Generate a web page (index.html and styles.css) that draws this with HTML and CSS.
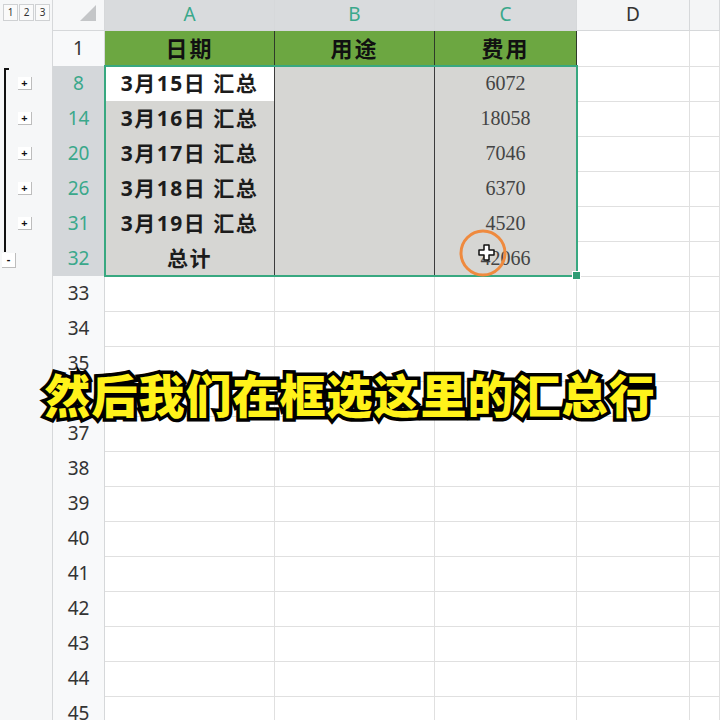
FILE: index.html
```html
<!DOCTYPE html>
<html lang="zh-CN">
<head>
    <meta charset="UTF-8">
    <meta name="viewport" content="width=device-width, initial-scale=1.0">
    <title>分类汇总</title>
    <link rel="stylesheet" href="styles.css">
</head>
<body>
<div class="sheet">
    <div class="row head">
        <div class="outline">
            <div class="levels"><span>1</span><span>2</span><span>3</span></div>
        </div>
        <div class="corner"><div class="tri"></div></div>
        <div class="col sel">A</div>
        <div class="col sel">B</div>
        <div class="col sel">C</div>
        <div class="col">D</div>
        <div class="col"></div>
    </div>

    <div class="row">
        <div class="outline"></div>
        <div class="num">1</div>
        <div class="cell title">日期</div>
        <div class="cell title">用途</div>
        <div class="cell title">费用</div>
        <div class="cell"></div>
        <div class="cell"></div>
    </div>
    <div class="row">
        <div class="outline"><span class="btn">+</span></div>
        <div class="num on">8</div>
        <div class="cell data name active">3月15日 汇总</div>
        <div class="cell data"></div>
        <div class="cell data money">6072</div>
        <div class="cell"></div>
        <div class="cell"></div>
    </div>
    <div class="row">
        <div class="outline"><span class="btn">+</span></div>
        <div class="num on">14</div>
        <div class="cell data name">3月16日 汇总</div>
        <div class="cell data"></div>
        <div class="cell data money">18058</div>
        <div class="cell"></div>
        <div class="cell"></div>
    </div>
    <div class="row">
        <div class="outline"><span class="btn">+</span></div>
        <div class="num on">20</div>
        <div class="cell data name">3月17日 汇总</div>
        <div class="cell data"></div>
        <div class="cell data money">7046</div>
        <div class="cell"></div>
        <div class="cell"></div>
    </div>
    <div class="row">
        <div class="outline"><span class="btn">+</span></div>
        <div class="num on">26</div>
        <div class="cell data name">3月18日 汇总</div>
        <div class="cell data"></div>
        <div class="cell data money">6370</div>
        <div class="cell"></div>
        <div class="cell"></div>
    </div>
    <div class="row">
        <div class="outline"><span class="btn">+</span></div>
        <div class="num on">31</div>
        <div class="cell data name">3月19日 汇总</div>
        <div class="cell data"></div>
        <div class="cell data money">4520</div>
        <div class="cell"></div>
        <div class="cell"></div>
    </div>
    <div class="row">
        <div class="outline"><span class="btn minus">-</span></div>
        <div class="num on">32</div>
        <div class="cell data name">总计</div>
        <div class="cell data"></div>
        <div class="cell data money">42066</div>
        <div class="cell"></div>
        <div class="cell"></div>
    </div>

    <div class="row"><div class="outline"></div><div class="num">33</div><div class="cell"></div><div class="cell"></div><div class="cell"></div><div class="cell"></div><div class="cell"></div></div>
    <div class="row"><div class="outline"></div><div class="num">34</div><div class="cell"></div><div class="cell"></div><div class="cell"></div><div class="cell"></div><div class="cell"></div></div>
    <div class="row"><div class="outline"></div><div class="num">35</div><div class="cell"></div><div class="cell"></div><div class="cell"></div><div class="cell"></div><div class="cell"></div></div>
    <div class="row"><div class="outline"></div><div class="num">36</div><div class="cell"></div><div class="cell"></div><div class="cell"></div><div class="cell"></div><div class="cell"></div></div>
    <div class="row"><div class="outline"></div><div class="num">37</div><div class="cell"></div><div class="cell"></div><div class="cell"></div><div class="cell"></div><div class="cell"></div></div>
    <div class="row"><div class="outline"></div><div class="num">38</div><div class="cell"></div><div class="cell"></div><div class="cell"></div><div class="cell"></div><div class="cell"></div></div>
    <div class="row"><div class="outline"></div><div class="num">39</div><div class="cell"></div><div class="cell"></div><div class="cell"></div><div class="cell"></div><div class="cell"></div></div>
    <div class="row"><div class="outline"></div><div class="num">40</div><div class="cell"></div><div class="cell"></div><div class="cell"></div><div class="cell"></div><div class="cell"></div></div>
    <div class="row"><div class="outline"></div><div class="num">41</div><div class="cell"></div><div class="cell"></div><div class="cell"></div><div class="cell"></div><div class="cell"></div></div>
    <div class="row"><div class="outline"></div><div class="num">42</div><div class="cell"></div><div class="cell"></div><div class="cell"></div><div class="cell"></div><div class="cell"></div></div>
    <div class="row"><div class="outline"></div><div class="num">43</div><div class="cell"></div><div class="cell"></div><div class="cell"></div><div class="cell"></div><div class="cell"></div></div>
    <div class="row"><div class="outline"></div><div class="num">44</div><div class="cell"></div><div class="cell"></div><div class="cell"></div><div class="cell"></div><div class="cell"></div></div>
    <div class="row"><div class="outline"></div><div class="num">45</div><div class="cell"></div><div class="cell"></div><div class="cell"></div><div class="cell"></div><div class="cell"></div></div>

    <!-- overlays -->
    <div class="bracket"></div>
    <div class="selection"><span class="handle"></span></div>
    <div class="pointer">
        <svg width="50" height="50" viewBox="0 0 50 50">
            <circle cx="25" cy="25" r="22" fill="none" stroke="#ef8a3e" stroke-width="3"/>
            <path d="M26 17h5v5h5v5h-5v5h-5v-5h-5v-5h5z" fill="#fff" stroke="#111" stroke-width="1.5" stroke-linejoin="round"/>
        </svg>
    </div>
    <div class="caption">然后我们在框选这里的汇总行</div>
</div>
</body>
</html>
```

FILE: styles.css
```css
html {
    font-family: 'Noto Sans', 'Noto Sans CJK SC', sans-serif;
}
body {
    margin: 0;
    background: #fff;
    overflow: hidden;
}
.sheet {
    position: relative;
    width: 720px;
    height: 720px;
    overflow: hidden;
}
.row {
    display: grid;
    grid-template-columns: 53px 52px 170px 160px 142px 113px 30px;
    height: 35px;
}
.row.head {
    height: 31px;
}
.row > div {
    box-sizing: border-box;
}

/* outline gutter */
.outline {
    background: #f6f7f8;
    border-right: 1px solid #d6d8da;
    position: relative;
}
.levels {
    display: flex;
    margin: 4px 0 0 3px;
}
.levels span {
    width: 13px;
    height: 15px;
    border: 1px solid #cfd1d3;
    background: #fafafa;
    font-size: 10px;
    line-height: 15px;
    text-align: center;
    color: #333;
    margin-right: 1px;
}
.btn {
    position: absolute;
    left: 18px;
    top: 11px;
    width: 13px;
    height: 12px;
    background: #fff;
    border-right: 1px solid #bdbdbd;
    border-bottom: 1px solid #bdbdbd;
    font-size: 11px;
    font-weight: 700;
    line-height: 11px;
    text-align: center;
    color: #111;
}
.btn.minus {
    left: 2px;
    top: 12px;
    width: 13px;
    height: 14px;
}

/* headers */
.corner {
    background: #f6f7f8;
    border-right: 1px solid #d6d8da;
    border-bottom: 1px solid #d6d8da;
    position: relative;
}
.tri {
    position: absolute;
    right: 8px;
    bottom: 9px;
    width: 0;
    height: 0;
    border-left: 16px solid transparent;
    border-bottom: 16px solid #c4c6c8;
}
.col {
    background: #f4f5f6;
    border-right: 1px solid #d6d8da;
    border-bottom: 1px solid #d6d8da;
    text-align: center;
    font-size: 19px;
    line-height: 28px;
    color: #333;
}
.col.sel {
    background: #d9dbdd;
    color: #3aa88b;
}
.num {
    background: #f8f9fa;
    border-right: 1px solid #d6d8da;
    border-bottom: 1px solid #e2e3e5;
    text-align: center;
    font-size: 19px;
    line-height: 35px;
    color: #333;
}
.num.on {
    background: #d4d7da;
    color: #3aa88b;
}

/* cells */
.cell {
    border-right: 1px solid #e0e0e0;
    border-bottom: 1px solid #e0e0e0;
    text-align: center;
    line-height: 34px;
}
.title {
    background: #6ca741;
    border-right: 1px solid #2f3a2a;
    border-bottom: 1px solid #2f3a2a;
    font-weight: 700;
    font-size: 22px;
    letter-spacing: 2px;
    color: #111;
}
.data {
    background: #d6d6d3;
    border-right: 1px solid #3b3b3b;
    border-bottom: 1px solid #3b3b3b;
}
.name {
    font-weight: 700;
    font-size: 21px;
    letter-spacing: 1.5px;
    color: #1c1c1c;
}
.name.active {
    background: #fff;
}
.money {
    font-family: 'Liberation Serif', serif;
    font-size: 20px;
    color: #444;
}

/* overlays */
.bracket {
    position: absolute;
    left: 4px;
    top: 68px;
    width: 5px;
    height: 184px;
    border-left: 2px solid #111;
    border-top: 2px solid #111;
    box-sizing: border-box;
}
.selection {
    position: absolute;
    left: 104px;
    top: 65px;
    width: 474px;
    height: 212px;
    border: 2px solid #38a880;
    box-sizing: border-box;
}
.handle {
    position: absolute;
    right: -5px;
    bottom: -5px;
    width: 7px;
    height: 7px;
    background: #2f9c74;
    border: 1px solid #fff;
}
.pointer {
    position: absolute;
    left: 458px;
    top: 228px;
    width: 50px;
    height: 50px;
}
.caption {
    position: absolute;
    left: 0;
    right: 20px;
    top: 363px;
    text-align: center;
    font-family: 'Noto Sans CJK SC', sans-serif;
    font-weight: 900;
    font-size: 46px;
    letter-spacing: 1px;
    line-height: 60px;
    color: #fff21a;
    -webkit-text-stroke: 7px #000;
    paint-order: stroke fill;
}
```
